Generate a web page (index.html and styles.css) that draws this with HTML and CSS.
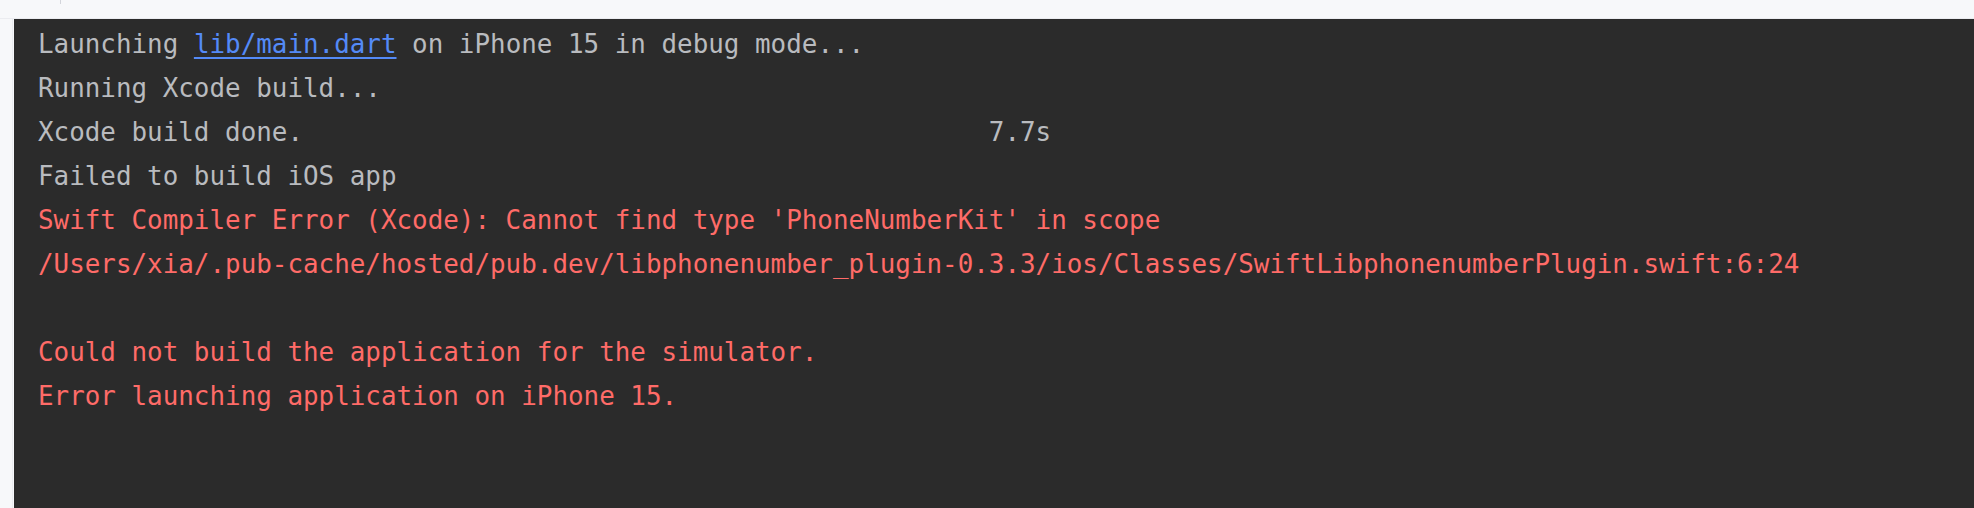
FILE: index.html
```html
<!DOCTYPE html>
<html lang="en">
<head>
<meta charset="utf-8">
<title>Run console</title>
<link rel="stylesheet" href="styles.css">
</head>
<body>
<div class="app">
  <div class="topbar"><span class="tick"></span></div>
  <div class="main">
    <div class="gutter"></div>
    <div class="console">
      <div class="line">Launching <a class="link" href="#">lib/main.dart</a> on iPhone 15 in debug mode...</div>
      <div class="line">Running Xcode build...</div>
      <div class="line">Xcode build done.                                            7.7s</div>
      <div class="line">Failed to build iOS app</div>
      <div class="line err">Swift Compiler Error (Xcode): Cannot find type 'PhoneNumberKit' in scope</div>
      <div class="line err">/Users/xia/.pub-cache/hosted/pub.dev/libphonenumber_plugin-0.3.3/ios/Classes/SwiftLibphonenumberPlugin.swift:6:24</div>
      <div class="line err"> </div>
      <div class="line err">Could not build the application for the simulator.</div>
      <div class="line err">Error launching application on iPhone 15.</div>
    </div>
  </div>
</div>
</body>
</html>
```

FILE: styles.css
```css
html, body {
  margin: 0;
  padding: 0;
  height: 100%;
  background: #f7f8fa;
  overflow: hidden;
}

.app {
  display: flex;
  flex-direction: column;
  height: 100%;
}

.topbar {
  height: 18px;
  flex: 0 0 auto;
  border-bottom: 1px solid #ebecf0;
  position: relative;
}

.tick {
  position: absolute;
  left: 60px;
  top: 0;
  width: 1px;
  height: 4px;
  background: #d3d5db;
}

.main {
  flex: 1 1 auto;
  display: flex;
  min-height: 0;
}

.gutter {
  width: 12px;
  flex: 0 0 auto;
  border-right: 1px solid #ebecf0;
  margin-right: 1px;
}

.console {
  flex: 1 1 auto;
  background: #2b2b2b;
  padding: 3px 0 0 24px;
  font-family: "DejaVu Sans Mono", "Liberation Mono", monospace;
  font-size: 25.9px;
  line-height: 44px;
  color: #b9bbbf;
}

.line {
  white-space: pre;
  height: 44px;
}

.err {
  color: #ff6b68;
}

.link {
  color: #548af7;
  text-decoration: underline;
  text-underline-offset: 4px;
  text-decoration-thickness: 2px;
}
```
